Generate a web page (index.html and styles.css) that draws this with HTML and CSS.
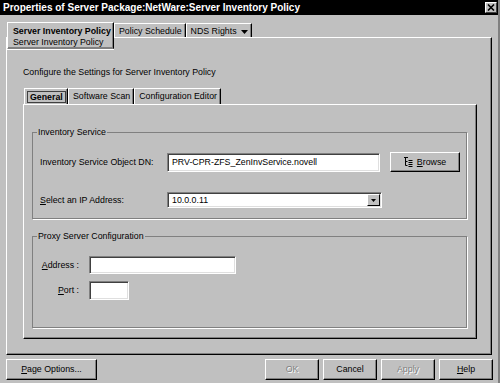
FILE: index.html
```html
<!DOCTYPE html>
<html>

<head>
    <title>Properties of Server Package</title>
    <link rel="stylesheet" href="styles.css">
</head>

<body>
    <div class="window">
        <div class="titlebar">
            <span class="title">Properties of Server Package:NetWare:Server Inventory Policy</span>
            <span class="close">
                <svg width="8" height="7" viewBox="0 0 8 7">
                    <path d="M1 0.5 L7 6.5 M7 0.5 L1 6.5" stroke="#000" stroke-width="1.6" />
                </svg>
            </span>
        </div>

        <div class="page-tabs">
            <div class="ptab active">
                <b>Server Inventory Policy</b>
                <span>Server Inventory Policy</span>
            </div>
            <div class="ptab">Policy Schedule</div>
            <div class="ptab">NDS Rights
                <svg class="tab-arrow" width="7" height="4" viewBox="0 0 7 4">
                    <path d="M0 0 H7 L3.5 4 Z" fill="#000" />
                </svg>
            </div>
        </div>

        <div class="page">
            <p class="intro">Configure the Settings for Server Inventory Policy</p>

            <div class="sub-tabs">
                <div class="stab active"><span class="focus">General</span></div>
                <div class="stab">Software Scan</div>
                <div class="stab">Configuration Editor</div>
            </div>

            <div class="sub-page">
                <fieldset class="group inventory">
                    <legend>Inventory Service</legend>
                    <div class="row first">
                        <label class="lbl">Inventory Service Object DN:</label>
                        <div class="field dn">PRV-CPR-ZFS_ZenInvService.novell</div>
                        <button class="btn browse">
                            <svg width="9" height="10" viewBox="0 0 9 10">
                                <path d="M0 0.5 H4 M1.5 0.5 V8.5 M1.5 4.5 H3.5 M1.5 8.5 H3.5" stroke="#000" stroke-width="1" fill="none" />
                                <path d="M4.5 3.5 H8.5 M4.5 5.5 H8.5 M4.5 7.5 H8.5 M4.5 9.5 H8.5" stroke="#000" stroke-width="1" fill="none" />
                            </svg>
                            <span><u>B</u>rowse</span>
                        </button>
                    </div>
                    <div class="row second">
                        <label class="lbl"><u>S</u>elect an IP Address:</label>
                        <div class="field combo">
                            <span>10.0.0.11</span>
                            <span class="drop">
                                <svg width="5" height="3" viewBox="0 0 5 3">
                                    <path d="M0 0 H5 L2.5 3 Z" fill="#000" />
                                </svg>
                            </span>
                        </div>
                    </div>
                </fieldset>

                <fieldset class="group proxy">
                    <legend>Proxy Server Configuration</legend>
                    <div class="row first">
                        <label class="lbl short"><u>A</u>ddress :</label>
                        <div class="field address"></div>
                    </div>
                    <div class="row port-row">
                        <label class="lbl short"><u>P</u>ort :</label>
                        <div class="field port"></div>
                    </div>
                </fieldset>
            </div>
        </div>

        <div class="footer">
            <button class="btn wide"><u>P</u>age Options...</button>
            <div class="actions">
                <button class="btn action" disabled>OK</button>
                <button class="btn action">Cancel</button>
                <button class="btn action" disabled>Apply</button>
                <button class="btn action"><u>H</u>elp</button>
            </div>
        </div>
    </div>
</body>

</html>
```

FILE: styles.css
```css
body {
    margin: 0;
    font-family: "Liberation Sans", Arial, sans-serif;
    font-size: 8.8px;
    line-height: 11px;
    color: #000;
    background-color: #c0c0c0;
}

.window {
    width: 500px;
    height: 383px;
    box-sizing: border-box;
    background-color: #c0c0c0;
    border-right: 2px solid #808080;
    overflow: hidden;
}

.titlebar {
    height: 15px;
    background-color: #000;
    color: #fff;
    display: flex;
    align-items: center;
    justify-content: space-between;
    padding: 0 1px 0 3px;
}

.title {
    font-weight: bold;
    font-size: 10px;
    line-height: 15px;
}

.close {
    width: 10px;
    height: 9px;
    background-color: #c0c0c0;
    border-top: 1px solid #fff;
    border-left: 1px solid #fff;
    border-right: 1px solid #404040;
    border-bottom: 1px solid #404040;
    display: flex;
    align-items: center;
    justify-content: center;
}

/* top level tabs */
.page-tabs {
    display: flex;
    align-items: flex-start;
    margin-top: 7px;
    padding-left: 7px;
}

.ptab {
    height: 14px;
    margin-top: 1px;
    box-sizing: border-box;
    padding: 2px 3px 0 4px;
    border-top: 1px solid #fff;
    border-left: 1px solid #fff;
    border-right: 1px solid #000;
    box-shadow: inset -1px 0 0 #808080;
    white-space: nowrap;
    display: flex;
    align-items: flex-start;
}

.ptab.active {
    position: relative;
    z-index: 1;
    width: 107px;
    height: 27px;
    margin-top: 0;
    margin-bottom: -12px;
    flex-direction: column;
    padding: 3px 0 0 5px;
    background-color: #c0c0c0;
    border-bottom: 1px solid #808080;
    box-shadow: inset -1px -1px 0 #808080, 0 1px 0 #fff;
}

.tab-arrow {
    margin: 4px 0 0 4px;
}

.page {
    height: 318px;
    margin: 0 6px;
    box-sizing: border-box;
    padding-top: 29px;
    border-top: 1px solid #fff;
    border-left: 1px solid #fff;
    border-right: 1px solid #000;
    border-bottom: 1px solid #000;
    box-shadow: inset -1px -1px 0 #808080;
}

.intro {
    margin: 0 0 10px 16px;
}

/* second level tabs */
.sub-tabs {
    display: flex;
    padding-left: 17px;
}

.stab {
    height: 16px;
    box-sizing: border-box;
    padding: 2px 3px 0 4px;
    border-top: 1px solid #fff;
    border-left: 1px solid #fff;
    border-right: 1px solid #000;
    box-shadow: inset -1px 0 0 #808080;
    white-space: nowrap;
}

.stab.active {
    width: 44px;
    padding: 2px 0 0 2px;
}

.focus {
    display: inline-block;
    font-weight: bold;
    padding: 0 2px;
    line-height: 10px;
    border: 1px solid #404040;
}

.sub-page {
    width: 454px;
    height: 235px;
    margin-left: 16px;
    box-sizing: border-box;
    padding-top: 22px;
    border-top: 1px solid #fff;
    border-left: 1px solid #fff;
    border-right: 1px solid #000;
    border-bottom: 1px solid #000;
    box-shadow: inset -1px -1px 0 #808080;
}

/* group boxes */
.group {
    width: 435px;
    margin: 0 0 0 8px;
    padding: 0 0 0 7px;
    box-sizing: border-box;
    min-width: 0;
    border: 1px solid #808080;
    box-shadow: 1px 1px 0 #fff;
}

.group legend {
    padding: 0 1px;
    margin-left: -3px;
    line-height: 11px;
}

.group.inventory {
    height: 92px;
}

.group.proxy {
    height: 97px;
    margin-top: 12px;
}

.row {
    display: flex;
    align-items: center;
}

.row.first {
    margin-top: 14px;
}

.row.second {
    margin-top: 20px;
}

.row.port-row {
    margin-top: 7px;
}

.lbl {
    width: 127px;
    flex-shrink: 0;
}

.lbl.short {
    width: 39px;
    margin-right: 10px;
    text-align: right;
}

.field {
    box-sizing: border-box;
    background-color: #fff;
    border-top: 1px solid #808080;
    border-left: 1px solid #808080;
    border-right: 1px solid #fff;
    border-bottom: 1px solid #fff;
    box-shadow: inset 1px 1px 0 #404040, inset -1px -1px 0 #dfdfdf;
    padding-left: 4px;
    display: flex;
    align-items: center;
}

.field.dn {
    width: 213px;
    height: 19px;
}

.field.combo {
    width: 215px;
    height: 16px;
    justify-content: space-between;
    padding-right: 1px;
}

.drop {
    width: 13px;
    height: 12px;
    box-sizing: border-box;
    background-color: #c0c0c0;
    border-top: 1px solid #fff;
    border-left: 1px solid #fff;
    border-right: 1px solid #000;
    border-bottom: 1px solid #000;
    display: flex;
    align-items: center;
    justify-content: center;
}

.field.address {
    width: 147px;
    height: 18px;
}

.field.port {
    width: 40px;
    height: 19px;
}

/* buttons */
.btn {
    font-family: inherit;
    font-size: 8.8px;
    line-height: 11px;
    color: #000;
    background-color: #c0c0c0;
    box-sizing: border-box;
    padding: 0;
    border-top: 1px solid #fff;
    border-left: 1px solid #fff;
    border-right: 1px solid #000;
    border-bottom: 1px solid #000;
    box-shadow: inset -1px -1px 0 #808080;
    border-radius: 0;
}

.btn:disabled {
    color: #808080;
    text-shadow: 1px 1px 0 #fff;
}

.browse {
    width: 70px;
    height: 20px;
    margin-left: 10px;
    display: flex;
    align-items: center;
    justify-content: center;
    gap: 4px;
}

.footer {
    display: flex;
    justify-content: space-between;
    margin-top: 4px;
    padding: 0 5px 0 6px;
}

.btn.wide {
    width: 91px;
    height: 21px;
}

.actions {
    display: flex;
    gap: 4px;
}

.btn.action {
    width: 54px;
    height: 21px;
}
```
